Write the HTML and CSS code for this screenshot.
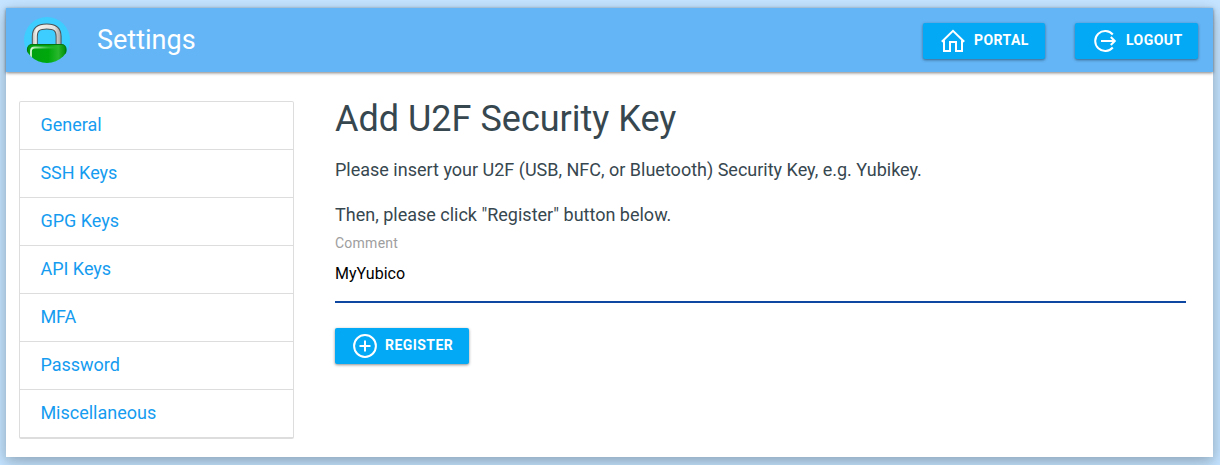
FILE: index.html
```html
<!DOCTYPE html>
<html lang="en">
<head>
<meta charset="utf-8">
<title>Settings</title>
<link rel="stylesheet" href="styles.css">
</head>
<body>
<div class="card">
  <header class="bar">
    <svg class="logo" viewBox="0 0 46 46" aria-hidden="true">
      <defs>
        <clipPath id="disc"><circle cx="23" cy="23" r="23"/></clipPath>
        <linearGradient id="steel" gradientUnits="userSpaceOnUse" x1="8" y1="0" x2="38" y2="0"><stop offset="0" stop-color="#bbb"/><stop offset=".15" stop-color="#f4f2ee"/><stop offset=".75" stop-color="#e4e2de"/><stop offset="1" stop-color="#999"/></linearGradient>
        <linearGradient id="green"><stop offset="0" stop-color="#00a010"/><stop offset=".55" stop-color="#00a80c"/><stop offset=".8" stop-color="#28b72d"/><stop offset="1" stop-color="#008c08"/></linearGradient>
        <linearGradient id="shine" gradientUnits="userSpaceOnUse" x1="6" y1="30" x2="34" y2="32"><stop offset="0" stop-color="#e8ffe8"/><stop offset="1" stop-color="#4fc756" stop-opacity="0"/></linearGradient>
      </defs>
      <g clip-path="url(#disc)">
        <rect width="46" height="46" fill="#3dcdff"/>
        <path d="M10.800 29V19.500C10.800 12 14.500 9.500 22.700 9.500S34.600 12 34.600 19.500V29" fill="none" stroke="#4d5558" stroke-width="6"/>
        <path d="M10.800 29V19.500C10.800 12 14.500 9.500 22.700 9.500S34.600 12 34.600 19.500V29" fill="none" stroke="url(#steel)" stroke-width="4"/>
        <rect x="3.500" y="27.500" width="38.500" height="24" rx="4.500" fill="url(#green)" stroke="#087410" stroke-width="1.200"/>
        <path d="M7 40v-6q0-3.500 4-3.500h25" fill="none" stroke="url(#shine)" stroke-width="1.800"/>
      </g>
    </svg>
    <div class="bar-title">Settings</div>
    <a class="btn">
      <svg class="icon" viewBox="0 0 24 24"><path d="M.8 12.800 12 1.800l11.200 11M3 11.500V22h6V13h6v9h6V11.500"/></svg>
      <span>Portal</span>
    </a>
    <a class="btn btn-logout">
      <svg class="icon" viewBox="0 0 24 24"><path d="M19.800 5.500A10 10 0 1 0 19.800 18.500M8 12h14M17.800 8l4 4-4 4"/></svg>
      <span>Logout</span>
    </a>
  </header>
  <div class="body">
    <nav class="menu">
      <a>General</a>
      <a>SSH Keys</a>
      <a>GPG Keys</a>
      <a>API Keys</a>
      <a>MFA</a>
      <a>Password</a>
      <a>Miscellaneous</a>
    </nav>
    <main class="main">
      <h1>Add U2F Security Key</h1>
      <p>Please insert your U2F (USB, NFC, or Bluetooth) Security Key, e.g. Yubikey.</p>
      <p>Then, please click "Register" button below.</p>
      <label for="comment">Comment</label>
      <input id="comment" type="text" value="MyYubico">
      <a class="btn btn-register">
        <svg class="icon" viewBox="0 0 24 24"><circle cx="12" cy="12" r="10.900"/><path d="M12 6.500v11M6.500 12h11"/></svg>
        <span>Register</span>
      </a>
    </main>
  </div>
</div>
</body>
</html>
```
FILE: styles.css
```css
* { box-sizing: border-box; }
body {
  margin: 0;
  height: 465px;
  padding: 8px 7px 8px 6px;
  overflow: hidden;
  background: #c4e4ff;
  color: #37474f;
  font: 18px/27px Roboto, sans-serif;
}
.card {
  height: 449px;
  background: #fff;
  box-shadow: 0 4px 12px rgba(0, 0, 0, .2), 0 6px 20px rgba(0, 0, 0, .1);
}
.bar {
  display: flex;
  align-items: center;
  height: 64px;
  padding: 0 15px 0 18px;
  background: #64b5f6;
  box-shadow: 0 1px 3px rgba(0, 0, 0, .5);
}
.logo { width: 46px; height: 46px; }
.bar-title {
  flex: 1;
  margin-left: 27px;
  color: #fff;
  font-size: 27px;
  line-height: 64px;
}
.btn {
  display: inline-flex;
  align-items: center;
  gap: 9px;
  width: 122px;
  height: 36px;
  margin-top: 2px;
  padding-left: 18px;
  border-radius: 2px;
  background: #03a9f4;
  color: #fff;
  font-size: 14px;
  font-weight: 700;
  letter-spacing: .45px;
  line-height: 34px;
  text-transform: uppercase;
  box-shadow: 0 1px 3px rgba(0, 0, 0, .45);
}
.btn-logout { width: 123px; margin-left: 30px; }
.icon {
  width: 24px;
  height: 24px;
  fill: none;
  stroke: #fff;
  stroke-width: 2;
}
.btn span { height: 36px; }
.body { display: flex; padding: 29px 27px 0 13px; }
.menu {
  width: 275px;
  height: 338px;
  border: 1px solid #ddd;
  border-bottom-width: 2px;
  border-radius: 2px;
}
.menu a {
  display: block;
  height: 48px;
  padding-left: 20.4px;
  border-bottom: 1px solid #ddd;
  color: #159cf0;
  line-height: 45px;
}
.menu a:last-child { border-bottom: 0; }
.main { flex: 1; margin-left: 41px; }
h1 {
  margin: -3px 0 15px;
  font-size: 36px;
  font-weight: 400;
  line-height: 43px;
}
p { margin: 0 0 18px; }
p + p { margin-bottom: 0; }
label {
  display: block;
  padding-top: 5px;
  color: #9e9e9e;
  font-size: 14px;
  letter-spacing: .25px;
  line-height: 20px;
}
input {
  display: block;
  width: 100%;
  height: 50px;
  padding: 0 0 8px;
  border: 0;
  border-bottom: 2px solid #0d47a1;
  outline: 0;
  color: #000;
  font: 16px Roboto, sans-serif;
}
.btn-register { width: 134px; margin-top: 25px; gap: 8px; }
```
